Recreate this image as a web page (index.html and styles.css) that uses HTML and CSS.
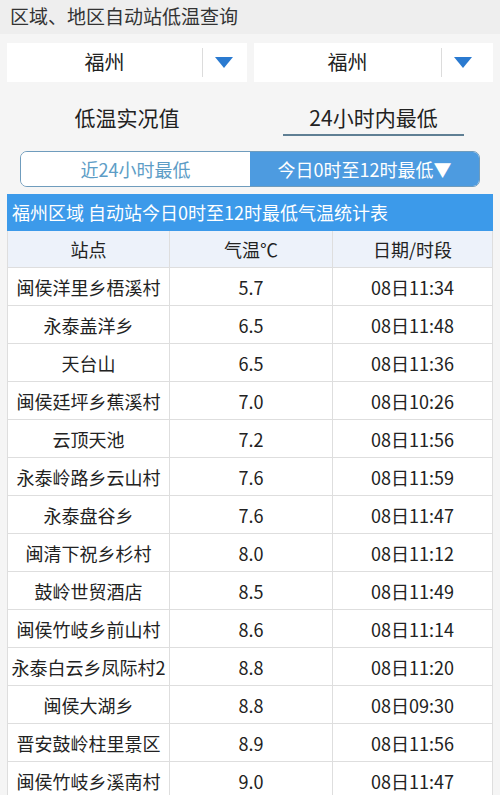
FILE: index.html
```html
<!DOCTYPE html>
<html lang="zh">
<head>
<meta charset="utf-8">
<link rel="stylesheet" href="styles.css">
</head>
<body>
<div class="topbar">区域、地区自动站低温查询</div>
<div class="selects">
  <div class="select">
    <div class="val">福州</div>
    <div class="divider"></div>
    <div class="arrow"></div>
  </div>
  <div class="select">
    <div class="val">福州</div>
    <div class="divider"></div>
    <div class="arrow"></div>
  </div>
</div>
<div class="tabs">
  <div class="tab">低温实况值</div>
  <div class="tab"><span class="active">24小时内最低</span></div>
</div>
<div class="segment">
  <div class="seg seg-off">近24小时最低</div>
  <div class="seg seg-on">今日0时至12时最低▼</div>
</div>
<div class="table">
  <div class="caption">福州区域 自动站今日0时至12时最低气温统计表</div>
  <div class="row head"><div>站点</div><div>气温℃</div><div>日期/时段</div></div>
  <div class="row"><div>闽侯洋里乡梧溪村</div><div>5.7</div><div>08日11:34</div></div>
  <div class="row"><div>永泰盖洋乡</div><div>6.5</div><div>08日11:48</div></div>
  <div class="row"><div>天台山</div><div>6.5</div><div>08日11:36</div></div>
  <div class="row"><div>闽侯廷坪乡蕉溪村</div><div>7.0</div><div>08日10:26</div></div>
  <div class="row"><div>云顶天池</div><div>7.2</div><div>08日11:56</div></div>
  <div class="row"><div>永泰岭路乡云山村</div><div>7.6</div><div>08日11:59</div></div>
  <div class="row"><div>永泰盘谷乡</div><div>7.6</div><div>08日11:47</div></div>
  <div class="row"><div>闽清下祝乡杉村</div><div>8.0</div><div>08日11:12</div></div>
  <div class="row"><div>鼓岭世贸酒店</div><div>8.5</div><div>08日11:49</div></div>
  <div class="row"><div>闽侯竹岐乡前山村</div><div>8.6</div><div>08日11:14</div></div>
  <div class="row"><div>永泰白云乡凤际村2</div><div>8.8</div><div>08日11:20</div></div>
  <div class="row"><div>闽侯大湖乡</div><div>8.8</div><div>08日09:30</div></div>
  <div class="row"><div>晋安鼓岭柱里景区</div><div>8.9</div><div>08日11:56</div></div>
  <div class="row"><div>闽侯竹岐乡溪南村</div><div>9.0</div><div>08日11:47</div></div>
</div>
</body>
</html>
```
FILE: styles.css
```css
* { box-sizing: border-box; }
html, body { margin: 0; padding: 0; }
body {
  width: 500px;
  height: 795px;
  overflow: hidden;
  background: #f5f5f5;
  font-family: "Noto Sans CJK SC", "Noto Sans", sans-serif;
  color: #222;
}
.topbar {
  height: 34px;
  line-height: 32px;
  padding-left: 10px;
  font-size: 19px;
  color: #333;
  background: #eeeeee;
}
.selects {
  display: grid;
  grid-template-columns: 240px 239px;
  column-gap: 7px;
  padding: 9px 0 0 7px;
}
.select {
  display: flex;
  align-items: center;
  height: 39px;
  background: #fff;
}
.select .val {
  font-size: 20px;
  line-height: 1;
  padding-bottom: 2px;
  text-align: center;
  width: 195px;
}
.select:nth-child(2) .val { width: 187px; }
.divider {
  width: 1px;
  height: 29px;
  background: #dcdcdc;
}
.arrow {
  margin-left: 12px;
  width: 0;
  height: 0;
  border-left: 9px solid transparent;
  border-right: 9px solid transparent;
  border-top: 11px solid #2a7ad0;
}
.tabs {
  display: grid;
  grid-template-columns: 240px 239px;
  column-gap: 7px;
  padding: 19px 0 0 7px;
}
.tab {
  text-align: center;
  font-size: 21px;
  line-height: 33px;
}
.tab .active {
  display: inline-block;
  width: 181px;
  border-bottom: 2px solid #5f7f94;
}
.segment {
  display: grid;
  grid-template-columns: 1fr 1fr;
  margin: 15px 20px 0 20px;
  height: 36px;
  border: 1px solid #6f9cbd;
  border-radius: 7px;
  overflow: hidden;
}
.seg {
  display: flex;
  align-items: center;
  justify-content: center;
  font-size: 18px;
}
.seg-off { background: #fff; color: #5d9dc6; }
.seg-on { background: #4d9be0; color: #fff; }
.table {
  margin: 7px 7px 0 7px;
  background: #fff;
  border-left: 1px solid #dedede;
  border-right: 1px solid #dedede;
}
.caption {
  height: 37px;
  line-height: 36px;
  padding-left: 5px;
  background: #3c9aea;
  color: #fff;
  font-size: 18px;
  margin: 0 -1px;
}
.row {
  display: grid;
  grid-template-columns: 161px 163px 1fr;
  height: 38px;
  border-bottom: 1px solid #dedede;
  font-size: 18px;
}
.row > div {
  display: flex;
  align-items: center;
  justify-content: center;
  border-left: 1px solid #dedede;
}
.row > div:first-child { border-left: none; }
.row.head {
  height: 37px;
  background: #edf2fa;
}
```
